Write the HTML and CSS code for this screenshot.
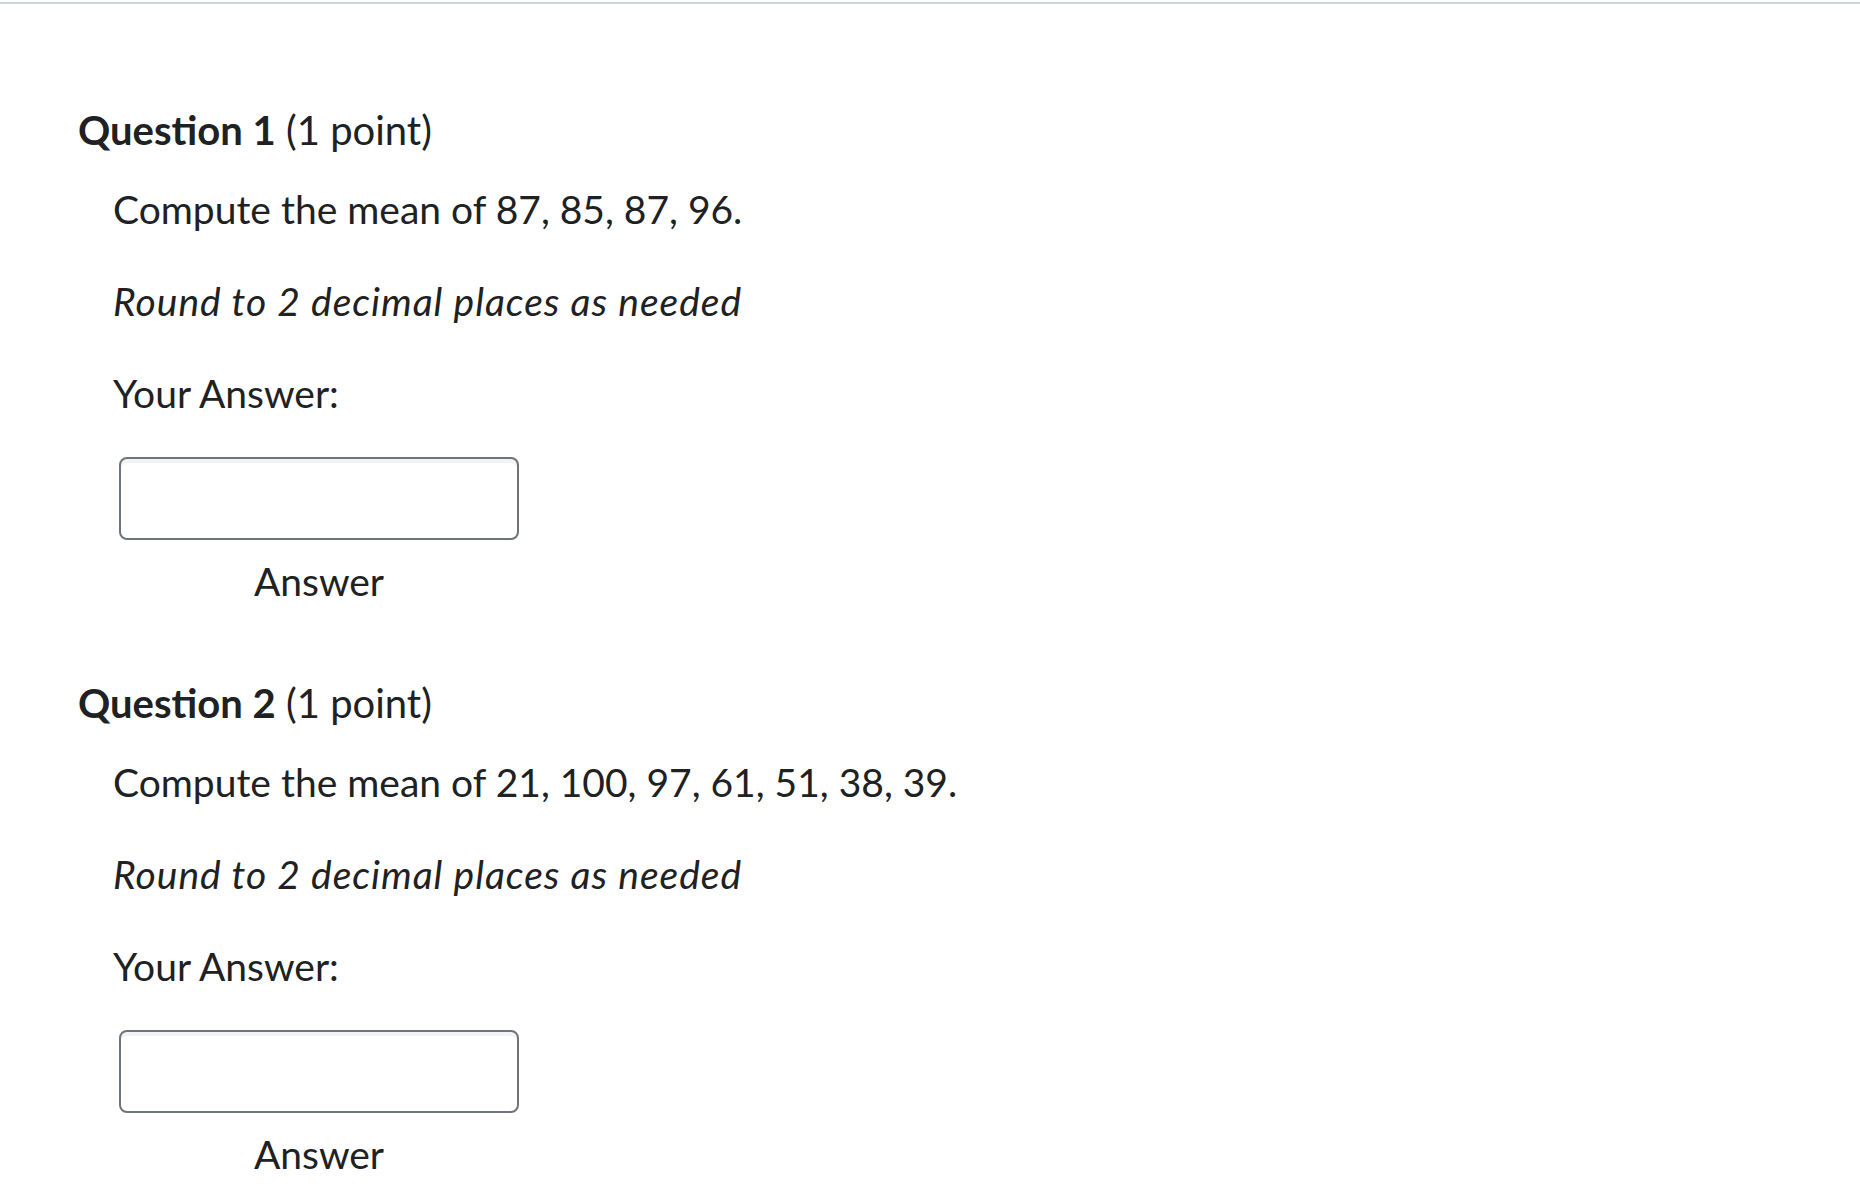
FILE: index.html
```html
<!DOCTYPE html>
<html lang="en">
<head>
<meta charset="utf-8">
<title>Quiz</title>
<link rel="stylesheet" href="styles.css">
</head>
<body>
<div class="topline"></div>
<main class="quiz">
  <section class="question q1">
    <h2 class="q-title"><strong>Question 1</strong> (1 point)</h2>
    <div class="q-body">
      <p class="q-text">Compute the mean of 87, 85, 87, 96.</p>
      <p class="q-hint">Round to 2 decimal places as needed</p>
      <p class="q-label">Your Answer:</p>
      <div class="answer">
        <input class="answer-input" type="text" aria-label="Answer">
        <span class="answer-label">Answer</span>
      </div>
    </div>
  </section>
  <section class="question q2">
    <h2 class="q-title"><strong>Question 2</strong> (1 point)</h2>
    <div class="q-body">
      <p class="q-text">Compute the mean of 21, 100, 97, 61, 51, 38, 39.</p>
      <p class="q-hint">Round to 2 decimal places as needed</p>
      <p class="q-label">Your Answer:</p>
      <div class="answer">
        <input class="answer-input" type="text" aria-label="Answer">
        <span class="answer-label">Answer</span>
      </div>
    </div>
  </section>
</main>
</body>
</html>
```

FILE: styles.css
```css
html, body {
  margin: 0;
  padding: 0;
  background: #ffffff;
}
body {
  font-family: Lato, "Open Sans", "Liberation Sans", sans-serif;
  color: #202122;
}
.topline {
  margin-top: 2px;
  border-top: 2px solid #d0d5da;
}
.quiz {
  padding: 102px 0 0 78px;
}
.question {
  display: flex;
  flex-direction: column;
}
.q2 {
  margin-top: 75px;
}
.q-title {
  margin: 0;
  font-size: 40px;
  line-height: 48px;
  font-weight: 400;
}
.q-title strong {
  font-weight: 700;
}
.q-body {
  display: flex;
  flex-direction: column;
  padding-left: 35px;
  margin-top: 32px;
}
.q-body p {
  margin: 0;
  font-size: 39px;
  line-height: 46px;
}
.q-body .q-hint {
  font-style: italic;
  letter-spacing: 1px;
  margin-top: 46px;
}
.q-body .q-label {
  margin-top: 46px;
}
.answer {
  display: flex;
  flex-direction: column;
  align-items: center;
  width: 400px;
  margin: 41px 0 0 6px;
}
.answer-input {
  box-sizing: border-box;
  width: 400px;
  height: 83px;
  margin: 0;
  border: 2px solid #6e7477;
  border-radius: 8px;
  box-shadow: inset 0 4px 0 0 rgba(185, 194, 208, 0.2);
  background: #ffffff;
  font: inherit;
  outline: none;
}
.answer-label {
  margin-top: 18px;
  font-size: 39px;
  line-height: 46px;
}
```
